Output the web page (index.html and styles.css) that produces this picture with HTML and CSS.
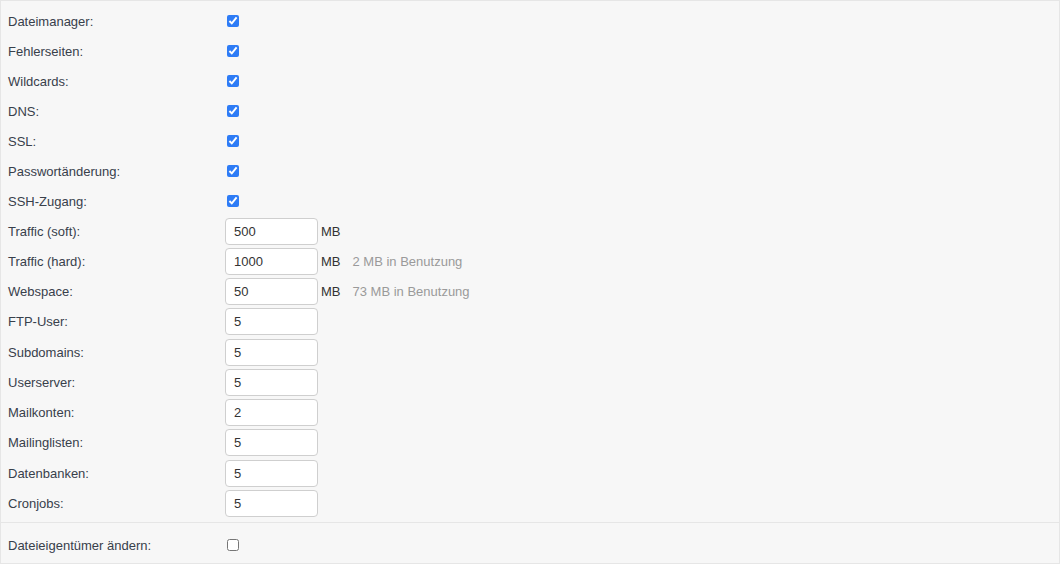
FILE: index.html
```html
<!DOCTYPE html>
<html lang="de">
<head>
<meta charset="utf-8">
<title>Einstellungen</title>
<link rel="stylesheet" href="styles.css">
</head>
<body>
<div class="box">
  <div class="section">
    <div class="row"><span class="label">Dateimanager:</span><span class="field"><input type="checkbox" class="check" checked></span></div>
    <div class="row"><span class="label">Fehlerseiten:</span><span class="field"><input type="checkbox" class="check" checked></span></div>
    <div class="row"><span class="label">Wildcards:</span><span class="field"><input type="checkbox" class="check" checked></span></div>
    <div class="row"><span class="label">DNS:</span><span class="field"><input type="checkbox" class="check" checked></span></div>
    <div class="row"><span class="label">SSL:</span><span class="field"><input type="checkbox" class="check" checked></span></div>
    <div class="row"><span class="label">Passwortänderung:</span><span class="field"><input type="checkbox" class="check" checked></span></div>
    <div class="row"><span class="label">SSH-Zugang:</span><span class="field"><input type="checkbox" class="check" checked></span></div>
    <div class="row row-input"><span class="label">Traffic (soft):</span><span class="field"><input type="text" class="num" value="500"><span class="unit">MB</span></span></div>
    <div class="row row-input"><span class="label">Traffic (hard):</span><span class="field"><input type="text" class="num" value="1000"><span class="unit">MB</span><span class="hint">2 MB in Benutzung</span></span></div>
    <div class="row row-input"><span class="label">Webspace:</span><span class="field"><input type="text" class="num" value="50"><span class="unit">MB</span><span class="hint">73 MB in Benutzung</span></span></div>
    <div class="row row-input"><span class="label">FTP-User:</span><span class="field"><input type="text" class="num" value="5"></span></div>
    <div class="row row-input"><span class="label">Subdomains:</span><span class="field"><input type="text" class="num" value="5"></span></div>
    <div class="row row-input"><span class="label">Userserver:</span><span class="field"><input type="text" class="num" value="5"></span></div>
    <div class="row row-input"><span class="label">Mailkonten:</span><span class="field"><input type="text" class="num" value="2"></span></div>
    <div class="row row-input"><span class="label">Mailinglisten:</span><span class="field"><input type="text" class="num" value="5"></span></div>
    <div class="row row-input"><span class="label">Datenbanken:</span><span class="field"><input type="text" class="num" value="5"></span></div>
    <div class="row row-input"><span class="label">Cronjobs:</span><span class="field"><input type="text" class="num" value="5"></span></div>
  </div>
  <div class="section section-last">
    <div class="row"><span class="label">Dateieigentümer ändern:</span><span class="field"><input type="checkbox" class="check"></span></div>
  </div>
</div>
</body>
</html>
```

FILE: styles.css
```css
html, body {
  margin: 0;
  padding: 0;
  background: #ffffff;
}

body {
  font-family: "Liberation Sans", Arial, Helvetica, sans-serif;
  font-size: 13px;
  color: #38404b;
}

.box {
  width: 1060px;
  box-sizing: border-box;
  border: 1px solid #e6e6e6;
  background: #f7f7f7;
}

.section {
  padding: 5px 0 3.5px;
  border-bottom: 1px solid #e6e6e6;
}

.section-last {
  padding: 7px 0 3px;
  border-bottom: none;
}

.row {
  display: grid;
  grid-template-columns: 224px 1fr;
  align-items: center;
  height: 30px;
}

.row-input {
  height: 30.25px;
}

.label {
  padding-left: 7px;
}

.field {
  display: flex;
  align-items: center;
}

.check {
  width: 12px;
  height: 12px;
  margin: 0 0 0 2px;
  accent-color: #2e7cf6;
}

.num {
  box-sizing: border-box;
  width: 93px;
  height: 27px;
  margin: 0;
  padding: 0 8px;
  border: 1px solid #cfcfcf;
  border-radius: 4px;
  background: #ffffff;
  font-family: "Liberation Sans", Arial, Helvetica, sans-serif;
  font-size: 13px;
  color: #333333;
  outline: none;
}

.unit {
  margin-left: 3px;
  color: #333333;
}

.hint {
  margin-left: 12px;
  color: #9a9a9a;
}
```
